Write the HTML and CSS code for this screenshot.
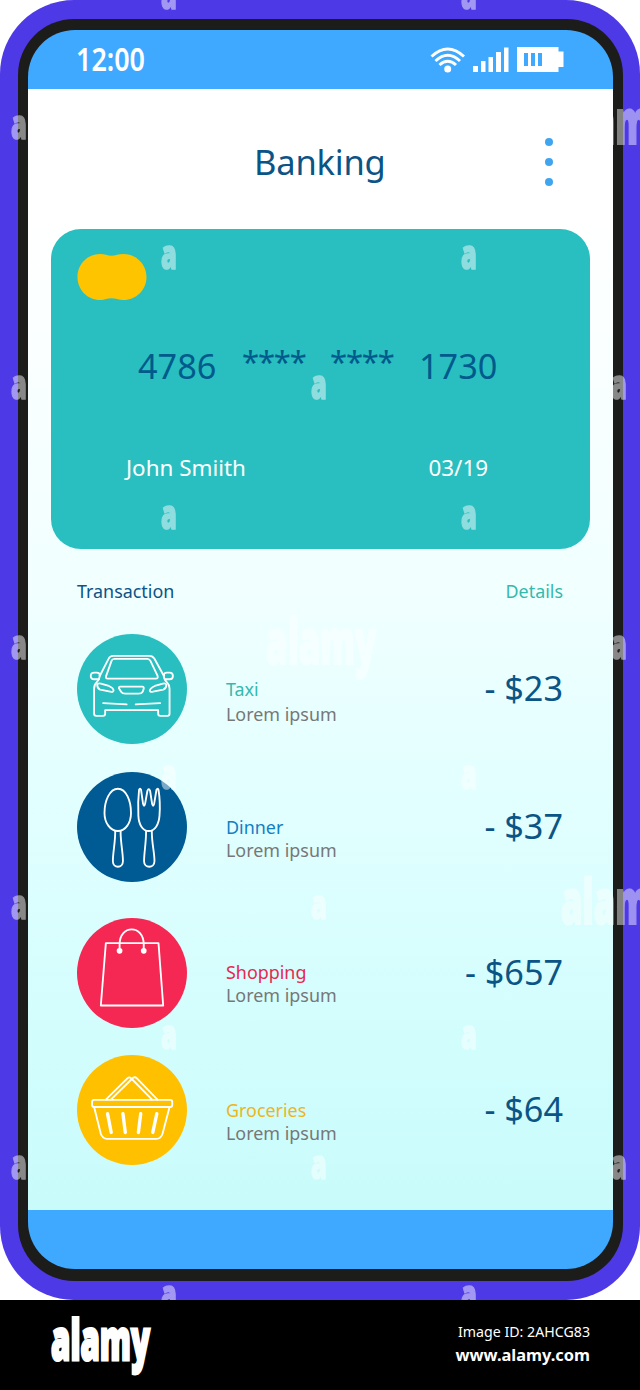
FILE: index.html
```html
<!DOCTYPE html>
<html lang="en">
<head>
<meta charset="utf-8">
<title>Banking</title>
<link rel="stylesheet" href="styles.css">
</head>
<body>
<main class="stage">
  <div class="phone">
    <div class="bezel">
      <div class="screen">
        <header class="status">
          <svg class="clock" width="70" height="36" viewBox="0 0 70 36"><text x="-1" y="29" textLength="69" lengthAdjust="spacingAndGlyphs">12:00</text></svg>
          <svg class="indicators" width="134" height="28" viewBox="0 0 134 28">
            <g fill="none" stroke="#fff" stroke-width="3">
              <path d="M1.500 10.500Q17.700 -4.500 34 10.500"/>
              <path d="M5.500 15Q17.700 3.500 30 15"/>
              <path d="M9.500 19Q17.700 11.500 26 19"/>
            </g>
            <circle cx="17.700" cy="23" r="3.500" fill="#fff"/>
            <path fill="#fff" d="M43 20h5v6h-5zM51 15h4.500v11H51zM58.500 11H63v15h-4.500zM66 6h5v20h-5zM74 1.500h4.500V26H74z"/>
            <path fill="#fff" d="M87 1h41.500v4.500h5V21h-5v5H87z"/>
            <path fill="#3fa9ff" d="M94 7h4v13h-4zM101 7h4v13h-4zM108 7h4v13h-4z"/>
          </svg>
        </header>
        <div class="body">
          <div class="titlebar">
            <h1 class="title">Banking</h1>
            <div class="menu"><i class="dot"></i><i class="dot"></i><i class="dot"></i></div>
          </div>
          <section class="card">
            <svg class="chip" width="70" height="48" viewBox="0 0 70 48"><path fill="#ffc400" d="M23.500 1C10.500 1 .5 11 .5 24s10 23 23 23c4 0 7-1.700 11-1.700S41.500 47 46.500 47c12.500 0 23-10 23-23S59 1 46.500 1c-5 0-8 1.700-12 1.700S27.500 1 23.500 1z"/></svg>
            <div class="number"><span class="n1">4786</span><span class="n2">****</span><span class="n3">****</span><span class="n4">1730</span></div>
            <div class="holder"><span>John Smiith</span><span>03/19</span></div>
          </section>
          <div class="heading"><span>Transaction</span><span class="teal">Details</span></div>
          <section class="list">
            <article class="row taxi">
              <svg class="icon" viewBox="52 42 328 328">
                <circle cx="216" cy="206" r="164" fill="#29bfc0"/>
                <g fill="none" stroke="#fff" stroke-width="5.500" stroke-linejoin="round" stroke-linecap="round">
                  <path d="M121 165L146 116Q150 107 160 107H268Q278 107 283 116L310 165M121 165Q118 180 110 187Q103 193 103 205V280Q103 286 109 286H130Q136 286 136 280V269H294V280Q294 286 300 286H322Q328 286 328 280V205Q328 193 321 187Q312 180 310 165"/>
                  <path d="M155 122Q157 116 164 116H262Q268 116 271 122L292 166Q295 175 287 175H144Q136 175 139 167Z"/>
                  <path d="M117 177H104Q93 177 93 167Q93 157 104 157H111Q121 157 119 166M314 177H328Q338 177 338 167Q338 157 328 157H320Q310 157 312 166"/>
                  <path d="M112 193Q115 188 123 190L147 197Q161 203 161 211Q160 216 151 214L121 208Q113 205 112 193ZM319 193Q316 188 308 190L284 197Q270 203 269 211Q270 216 279 214L309 208Q318 205 319 193Z"/>
                  <path d="M181 199H247Q252 199 251 205L248 214Q245 220 235 220H196Q187 220 184 215L177 204Q176 199 181 199Z"/>
                  <path d="M130 248L200 252M227 252L300 248"/>
                </g>
              </svg>
              <div class="info"><p class="name">Taxi</p><p class="sub">Lorem ipsum</p></div>
              <p class="amount">- $23</p>
            </article>
            <article class="row dinner">
              <svg class="icon" viewBox="52 36 328 328">
                <circle cx="216" cy="200" r="164" fill="#005b94"/>
                <g fill="none" stroke="#fff" stroke-width="5.500" stroke-linejoin="round" stroke-linecap="round">
                  <path d="M174 86C149 86 134 123 134 158C134 187 151 212 174 212C197 212 213 187 213 158C213 123 199 86 174 86Z"/>
                  <path d="M166 212C166 250 159 275 159 302C159 324 189 324 189 302C189 275 182 250 182 212"/>
                  <path d="M237 89Q240 82 243 89L249 131Q252 143 255 131L262 92Q266 82 270 92L276 131Q279 143 282 131L289 89Q293 82 295 89Q301 125 298 166C296 193 284 212 266 212C248 212 236 193 235 166Q233 125 237 89Z"/>
                  <path d="M258 212C258 250 252 275 252 302C252 324 283 324 283 302C283 275 275 250 275 212"/>
                </g>
              </svg>
              <div class="info"><p class="name">Dinner</p><p class="sub">Lorem ipsum</p></div>
              <p class="amount">- $37</p>
            </article>
            <article class="row shopping">
              <svg class="icon" viewBox="52 38 328 328">
                <circle cx="216" cy="202" r="164" fill="#f52853"/>
                <g fill="none" stroke="#fff" stroke-width="5.500" stroke-linejoin="round" stroke-linecap="round">
                  <path d="M138 113H295L309 299H123Z"/>
                  <path d="M179 136V117C179 57 251 57 251 117V136"/>
                </g>
                <circle cx="179" cy="136" r="8.500" fill="#fff"/><circle cx="251" cy="136" r="8.500" fill="#fff"/>
              </svg>
              <div class="info"><p class="name">Shopping</p><p class="sub">Lorem ipsum</p></div>
              <p class="amount">- $657</p>
            </article>
            <article class="row groceries">
              <svg class="icon" viewBox="52 45 328 328">
                <circle cx="216" cy="209" r="164" fill="#ffc000"/>
                <g fill="none" stroke="#fff" stroke-width="5.500" stroke-linejoin="round" stroke-linecap="round">
                  <rect x="97" y="179" width="239" height="21" rx="6"/>
                  <path d="M103 200L123 280Q128 295 142 295H289Q302 295 307 280L328 200"/>
                  <path d="M138 178L203 114Q208 109 214 115L276 178M153 178L214 118L219 113Q225 109 230 114L292 178"/>
                </g>
                <path d="M143 220L154 276M189 220L196 276M242 220L235 276M290 220L278 276" fill="none" stroke="#fff" stroke-width="10" stroke-linecap="round"/>
              </svg>
              <div class="info"><p class="name">Groceries</p><p class="sub">Lorem ipsum</p></div>
              <p class="amount">- $64</p>
            </article>
          </section>
        </div>
        <footer class="navbar"></footer>
      </div>
    </div>
  </div>
  <svg class="marks" width="640" height="1300" viewBox="0 0 640 1300">
    <g class="brand small">
      <text transform="translate(161 9) scale(.62 1)">a</text><text transform="translate(461 9) scale(.62 1)">a</text>
      <text transform="translate(11 139) scale(.62 1)">a</text>
      <text transform="translate(161 269) scale(.62 1)">a</text><text transform="translate(461 269) scale(.62 1)">a</text>
      <text transform="translate(11 399) scale(.62 1)">a</text><text transform="translate(311 399) scale(.62 1)">a</text><text transform="translate(611 399) scale(.62 1)">a</text>
      <text transform="translate(161 529) scale(.62 1)">a</text><text transform="translate(461 529) scale(.62 1)">a</text>
      <text transform="translate(11 659) scale(.62 1)">a</text><text transform="translate(611 659) scale(.62 1)">a</text>
      <text transform="translate(161 789) scale(.62 1)">a</text><text transform="translate(461 789) scale(.62 1)">a</text>
      <text transform="translate(11 919) scale(.62 1)">a</text><text transform="translate(311 919) scale(.62 1)">a</text>
      <text transform="translate(161 1049) scale(.62 1)">a</text><text transform="translate(461 1049) scale(.62 1)">a</text>
      <text transform="translate(11 1179) scale(.62 1)">a</text><text transform="translate(311 1179) scale(.62 1)">a</text><text transform="translate(611 1179) scale(.62 1)">a</text>
      <text transform="translate(161 1309) scale(.62 1)">a</text><text transform="translate(461 1309) scale(.62 1)">a</text>
    </g>
    <g class="brand large">
      <text x="561" y="144" textLength="110" lengthAdjust="spacingAndGlyphs">alamy</text>
      <text x="266" y="664" textLength="110" lengthAdjust="spacingAndGlyphs">alamy</text>
      <text x="561" y="924" textLength="110" lengthAdjust="spacingAndGlyphs">alamy</text>
    </g>
  </svg>
</main>
<div class="credit">
  <svg class="logo" width="104" height="60" viewBox="0 0 104 60"><text class="brand" x="2" y="44" textLength="99" lengthAdjust="spacingAndGlyphs">alamy</text></svg>
  <div class="source"><p class="id">Image ID: 2AHCG83</p><p class="site">www.alamy.com</p></div>
</div>
</body>
</html>
```

FILE: styles.css
```css
* { box-sizing: border-box; margin: 0; padding: 0; }
body { width: 640px; background: #fff; font-family: "Noto Sans", "Open Sans", sans-serif; color: #0b5486; }
svg { display: block; flex: none; }
.stage { position: relative; height: 1300px; }
.phone { height: 1300px; padding: 19px 17px 19px 18px; border-radius: 74px; background: #4e39e6; }
.bezel { height: 100%; padding: 11px 10px 12px; border-radius: 56px; background: #1c1c1b; }
.screen { height: 1239px; display: flex; flex-direction: column; border-radius: 47px; overflow: hidden; }
.status { height: 59px; flex: none; padding: 12px 49px 0; display: flex; justify-content: space-between; align-items: flex-start; background: #3fa9ff; }
.clock { overflow: visible; }
.clock text { font-size: 33px; font-weight: 600; fill: #fff; }
.indicators { margin-top: 4px; }
.body { height: 1121px; flex: none; padding-left: 23px; padding-right: 23px; background: linear-gradient(#fff 0%, #fff 12%, #f1ffff 45%, #e3ffff 62%, #d2fdfd 85%, #c9fbfb 100%); }
.titlebar { height: 140px; padding-left: 26px; padding-right: 37px; padding-top: 49px; display: grid; grid-template-columns: 1fr 8px; }
.title { padding-left: 177px; font-size: 34.500px; line-height: 48px; font-weight: 400; letter-spacing: -.2px; }
.menu { height: 48px; display: flex; flex-direction: column; justify-content: space-between; }
.dot { width: 8px; height: 8px; border-radius: 50%; background: #3fa5ef; }
.card { height: 320px; padding: 24px 26px 0; border-radius: 30px; background: #29bfc0; }
.number { display: flex; padding-left: 61px; margin-top: 40px; line-height: 49px; font-size: 34.300px; color: #005b8c; }
.n1 { width: 104px; }
.n2 { width: 88px; }
.n3 { width: 89px; }
.n2, .n3 { font-size: 31px; line-height: 40px; letter-spacing: -1.200px; }
.holder { margin-top: 62px; padding: 0 76px 0 49px; display: flex; justify-content: space-between; color: #fff; font-size: 22.400px; line-height: 32px; }
.heading { display: flex; justify-content: space-between; padding: 0 27px 0 26px; margin-top: 30px; height: 55px; line-height: 24px; font-size: 17.900px; }
.teal { color: #35b9ad; }
.list { padding: 0 27px 0 26px; display: flex; flex-direction: column; }
.row { height: 109px; display: grid; grid-template-columns: 110px 1fr auto; column-gap: 39px; margin-bottom: 29px; }
.icon { width: 110px; height: 110px; }
.info { padding-top: 43px; line-height: 24px; font-size: 17.900px; }
.amount { padding-top: 34px; line-height: 40px; font-size: 34.200px; }
.sub { color: #777; }
.taxi .name { color: #35b9ad; height: 25px; }
.dinner { margin-bottom: 37px; }
.dinner .name { color: #127fc5; height: 23px; }
.shopping { margin-bottom: 28px; }
.shopping .info { padding-top: 42px; }
.shopping .name { color: #e92850; height: 23px; }
.groceries .name { color: #edb51b; height: 23px; }
.navbar { flex: 1; background: #3fa9ff; }
.marks { position: absolute; left: 0; top: 0; overflow: hidden; }
.brand { font-family: "Noto Sans", sans-serif; font-weight: 900; fill: #fff; }
.small { font-size: 41px; opacity: .48; stroke: #fff; stroke-width: 1.500px; }
.large { font-size: 62px; opacity: .45; stroke: #fff; stroke-width: 2px; }
.credit { height: 90px; padding: 16px 50px 0 49px; display: flex; justify-content: space-between; background: #000; color: #fff; }
.logo .brand { font-size: 57px; stroke: #fff; stroke-width: 3px; }
.source { padding-top: 5px; text-align: right; }
.id { font-size: 14.200px; line-height: 22px; }
.site { font-size: 16.400px; line-height: 24px; font-weight: 700; }
```
